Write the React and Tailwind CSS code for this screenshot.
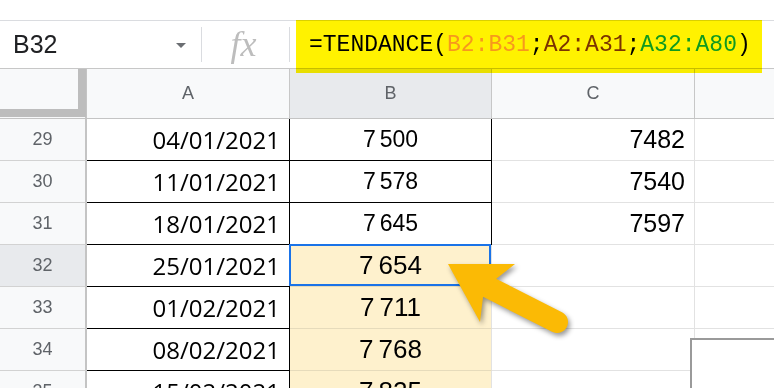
import React from 'react'

const rows = [
  { n: 29, date: '04/01/2021', b: ['7', '500'], c: '7482', done: true },
  { n: 30, date: '11/01/2021', b: ['7', '578'], c: '7540', done: true },
  { n: 31, date: '18/01/2021', b: ['7', '645'], c: '7597', done: true },
  { n: 32, date: '25/01/2021', b: ['7', '654'], c: '', selected: true },
  { n: 33, date: '01/02/2021', b: ['7', '711'], c: '' },
  { n: 34, date: '08/02/2021', b: ['7', '768'], c: '' },
  { n: 35, date: '15/02/2021', b: ['7', '825'], c: '' },
]

function Arrow() {
  return (
    <svg
      className="absolute left-[430px] top-[250px] overflow-visible"
      width="160"
      height="100"
      viewBox="0 0 160 100"
      style={{ filter: 'drop-shadow(2px 3px 2.5px rgba(0,0,0,0.4))' }}
    >
      <line x1="60" y1="38" x2="127" y2="72" stroke="#fbba05" strokeWidth="22" strokeLinecap="round" />
      <polygon points="18,14 85,14 66,29 53,47 50,72" fill="#fbba05" />
    </svg>
  )
}

function FormulaBar() {
  return (
    <div className="flex h-[49px] items-center border-y border-t-[#dadce0] border-b-[#c7c7c7] bg-white">
      <div className="flex w-[201px] items-center justify-between pl-[13px] pr-[15px]">
        <span className="text-[25px] leading-none text-[#202124]">B32</span>
        <span className="mt-[2px] h-0 w-0 border-x-[5px] border-t-[5px] border-x-transparent border-t-[#6b6e72]" />
      </div>
      <div className="h-[35px] w-px bg-[#dadce0]" />
      <div className="flex w-[87px] justify-center">
        <span className="pb-[2px] pr-[4px] text-[36px] italic leading-none text-[#bdbdbd] [font-family:'Liberation_Serif',serif]">fx</span>
      </div>
      <div className="h-[35px] w-px bg-[#dadce0]" />
    </div>
  )
}

function HeaderRow() {
  return (
    <div className="flex h-[50px] border-b border-[#c4c4c4] bg-[#f8f9fa] text-[18px] text-[#5f6368]">
      <div className="w-[87px] shrink-0 border-r-2 border-[#c4c4c4]">
        <div className="h-[48px] w-[86px] border-b-[8px] border-r-[8px] border-[#bdbdbd]" />
      </div>
      <div className="flex w-[203px] shrink-0 items-center justify-center border-r border-[#c7c7c7]">A</div>
      <div className="flex w-[202px] shrink-0 items-center justify-center border-r border-[#c7c7c7] bg-[#e8eaed]">B</div>
      <div className="flex w-[203px] shrink-0 items-center justify-center border-r border-[#c7c7c7]">C</div>
      <div className="flex-1" />
    </div>
  )
}

function Row({ r }) {
  const past = r.done
  return (
    <div className="flex h-[42px]">
      <div
        className={`flex w-[87px] shrink-0 items-center justify-center border-b border-r-2 border-b-[#d2d2d2] border-r-[#c4c4c4] text-[18px] text-[#5f6368] ${
          r.selected ? 'bg-[#e8eaed]' : 'bg-[#f8f9fa]'
        }`}
      >
        {r.n}
      </div>
      <div className="flex w-[203px] shrink-0 items-center justify-end border-b border-r border-black pr-[9px] text-[24px] text-black [font-family:'Open_Sans',sans-serif]">
        {r.date}
      </div>
      <div
        className={`relative flex w-[202px] shrink-0 items-center justify-center border-b border-r ${
          past
            ? 'border-black bg-white text-[23px]'
            : 'border-b-[#e6dbbb] border-r-[#e2e2e2] bg-[#fef1cd] text-[26px]'
        }`}
      >
        <span>{r.b[0]}</span>
        <span className={past ? 'ml-[4px]' : 'ml-[5px]'}>{r.b[1]}</span>
        {r.selected && (
          <div className="absolute -left-[1px] -top-[1px] bottom-0 right-0 border-2 border-[#1a73e8]" />
        )}
      </div>
      <div className="flex w-[203px] shrink-0 items-center justify-end border-b border-r border-[#e2e2e2] pr-[9px] text-[25px]">
        {r.c}
      </div>
      <div className="flex-1 border-b border-[#e2e2e2]" />
    </div>
  )
}

export default function App() {
  return (
    <div className="relative h-[388px] w-[774px] overflow-hidden bg-white text-black [font-family:'Liberation_Sans',Arial,sans-serif]">
      <div className="h-[20px]" />
      <FormulaBar />
      <HeaderRow />
      {rows.map((r) => (
        <Row key={r.n} r={r} />
      ))}

      {/* highlighted formula */}
      <div className="absolute left-[296px] top-[20px] flex h-[53px] w-[466px] items-center bg-[#fff200] pb-[3px] pl-[13px] text-[23px] leading-none mix-blend-multiply [font-family:'Liberation_Mono',monospace]">
        <span>=TENDANCE(</span>
        <span className="text-[#f7981d]">B2:B31</span>
        <span>;</span>
        <span className="text-[#7b3300]">A2:A31</span>
        <span>;</span>
        <span className="text-[#0f9a1f]">A32:A80</span>
        <span>)</span>
      </div>

      <div className="absolute left-[690px] top-[338px] h-[60px] w-[100px] border-2 border-[#9a9a9a] bg-white" />
      <Arrow />
    </div>
  )
}
